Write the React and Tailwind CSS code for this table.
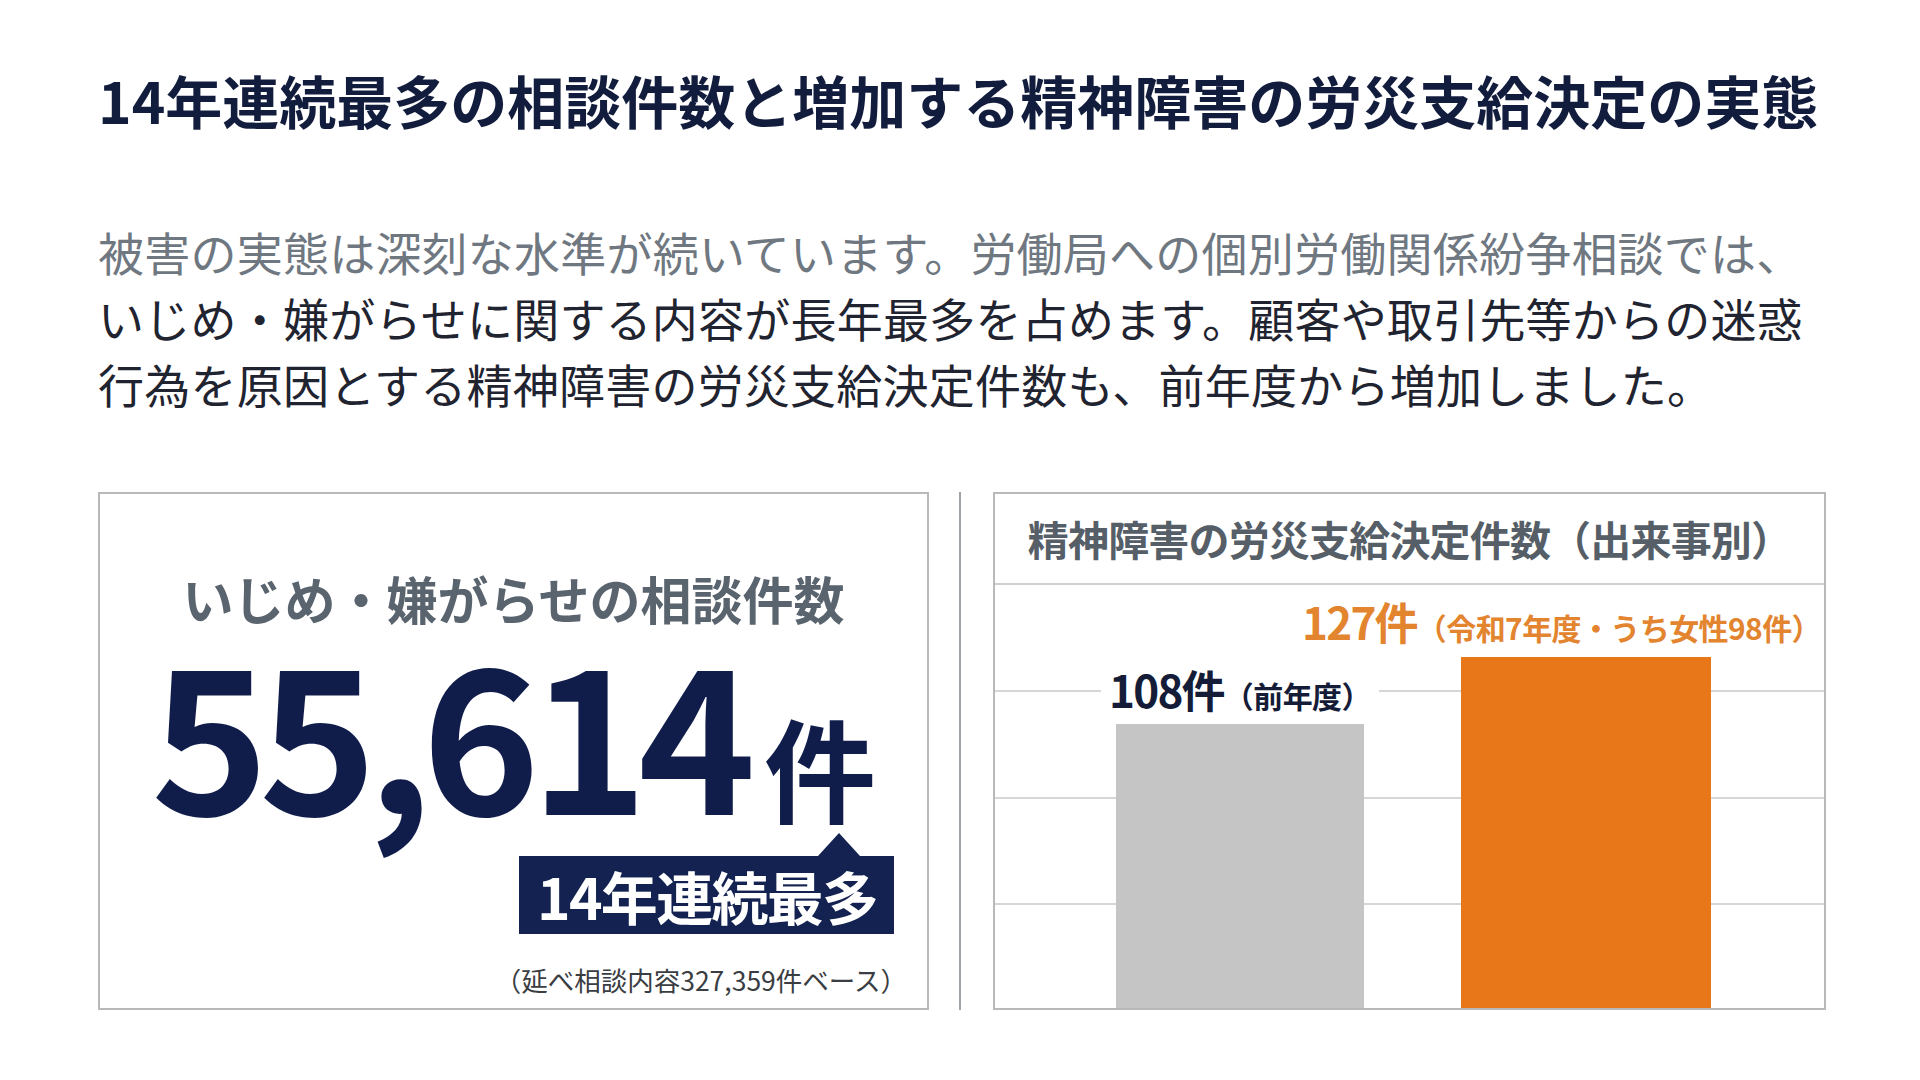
import React from "react";

/**
 * 労災・ハラスメント統計スライド
 * - 見出し + 説明文
 * - 左: 相談件数の大きな数字カード
 * - 右: 労災支給決定件数の棒グラフ
 */

const NumberCard = () => (
  <div className="w-[831px] shrink-0 h-full border-2 border-[#b9b9b9] flex flex-col items-center pt-[74px]">
    <div className="h-[60px] text-[51px] leading-[60px] font-bold text-[#5a646e] whitespace-nowrap">
      いじめ・嫌がらせの相談件数
    </div>
    <div className="h-[198px] flex items-baseline justify-center text-[#101d4b] font-bold whitespace-nowrap">
      <span className="text-[200px] leading-none tracking-[-0.05em]">55,614</span>
      <span className="text-[112px] leading-none ml-[18px]">件</span>
    </div>
    {/* 吹き出しバッジ */}
    <div className="relative self-end mr-[33px] mt-[30px] h-[78px] w-[375px] bg-[#132250] flex items-center pl-[18px]">
      <span className="absolute -top-[23px] right-[34px] w-0 h-0 border-l-[21px] border-r-[21px] border-b-[23px] border-l-transparent border-r-transparent border-b-[#132250]" />
      <span className="text-white font-bold text-[57px] leading-none tracking-[-0.03em] whitespace-nowrap">
        14年連続最多
      </span>
    </div>
    <div className="self-end mr-[20px] mt-[28px] text-[26.5px] leading-[36px] text-[#3a3d42] whitespace-nowrap">
      （延べ相談内容327,359件ベース）
    </div>
  </div>
);

const ChartCard = () => (
  <div className="w-[833px] shrink-0 h-full border-2 border-[#b9b9b9] flex flex-col">
    <div className="h-[91px] shrink-0 border-b-2 border-[#cfcfcf] flex items-center justify-center">
      <span className="text-[41px] font-bold text-[#565f68] tracking-[-0.02em] whitespace-nowrap">
        精神障害の労災支給決定件数（出来事別）
      </span>
    </div>
    <div className="relative flex-1 flex items-end pl-[121px]">
      {/* grid lines */}
      <div className="absolute left-0 right-0 top-[105px] h-[2px] bg-[#d6d6d6]" />
      <div className="absolute left-0 right-0 top-[212px] h-[2px] bg-[#d6d6d6]" />
      <div className="absolute left-0 right-0 top-[318px] h-[2px] bg-[#d6d6d6]" />

      <div className="relative w-[248px] h-[284px] bg-[#c5c5c5]">
        <div className="absolute -left-[15px] -top-[60px] h-[50px] bg-white px-[8px] flex items-baseline whitespace-nowrap text-[#141c38] font-bold">
          <span className="text-[44px] leading-[50px] tracking-[-0.04em]">108件</span>
          <span className="text-[30px] tracking-[-0.02em]">（前年度）</span>
        </div>
      </div>

      <div className="relative ml-[97px] w-[250px] h-[351px] bg-[#e8771a]">
        <div className="absolute -left-[159px] -top-[61px] h-[50px] flex items-baseline whitespace-nowrap text-[#e3842f] font-bold">
          <span className="text-[44px] leading-[50px] tracking-[-0.04em]">127件</span>
          <span className="text-[30px] tracking-[-0.02em]">（令和7年度・うち女性98件）</span>
        </div>
      </div>
    </div>
  </div>
);

export default function App() {
  return (
    <div className="w-[1920px] h-[1080px] bg-white overflow-hidden font-['Noto_Sans_CJK_JP','Noto_Sans',sans-serif] pt-[64px] pl-[98px]">
      <h1 className="text-[57px] leading-[70px] font-bold text-[#121c3d] whitespace-nowrap">
        14年連続最多の相談件数と増加する精神障害の労災支給決定の実態
      </h1>

      <p className="mt-[84px] text-[46px] leading-[66px] text-[#1f2430] whitespace-nowrap tracking-[0.005em]">
        <span className="text-[#6f7881]">
          被害の実態は深刻な水準が続いています。労働局への個別労働関係紛争相談では、
        </span>
        <br />
        いじめ・嫌がらせに関する内容が長年最多を占めます。顧客や取引先等からの迷惑
        <br />
        行為を原因とする精神障害の労災支給決定件数も、前年度から増加しました。
      </p>

      <div className="mt-[76px] h-[518px] flex">
        <NumberCard />
        <div className="ml-[30px] w-[2px] shrink-0 h-full bg-[#9ea3a8]" />
        <div className="ml-[32px] shrink-0 h-full">
          <ChartCard />
        </div>
      </div>
    </div>
  );
}
